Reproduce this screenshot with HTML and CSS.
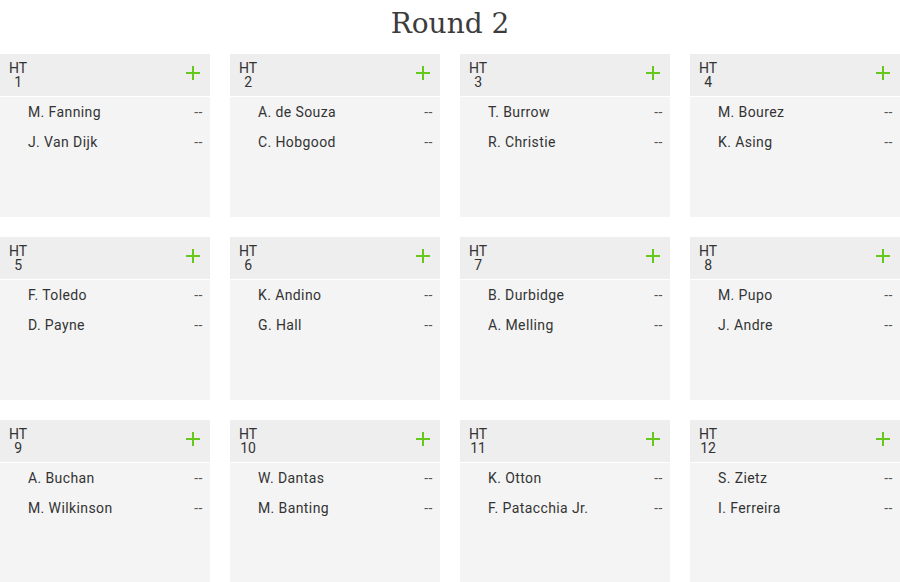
FILE: index.html
```html
<!DOCTYPE html>
<html>
<head>
  <title>Round 2</title>
  <link rel="stylesheet" href="styles.css">
</head>
<body>
  <h1 class="round-title">Round 2</h1>
  <div class="heat-grid">
    <div class="heat">
      <div class="heat-head"><div class="heat-label"><div>HT</div><div>1</div></div><span class="add"></span></div>
      <div class="surfer"><span>M. Fanning</span><span class="score">--</span></div>
      <div class="surfer"><span>J. Van Dijk</span><span class="score">--</span></div>
    </div>
    <div class="heat">
      <div class="heat-head"><div class="heat-label"><div>HT</div><div>2</div></div><span class="add"></span></div>
      <div class="surfer"><span>A. de Souza</span><span class="score">--</span></div>
      <div class="surfer"><span>C. Hobgood</span><span class="score">--</span></div>
    </div>
    <div class="heat">
      <div class="heat-head"><div class="heat-label"><div>HT</div><div>3</div></div><span class="add"></span></div>
      <div class="surfer"><span>T. Burrow</span><span class="score">--</span></div>
      <div class="surfer"><span>R. Christie</span><span class="score">--</span></div>
    </div>
    <div class="heat">
      <div class="heat-head"><div class="heat-label"><div>HT</div><div>4</div></div><span class="add"></span></div>
      <div class="surfer"><span>M. Bourez</span><span class="score">--</span></div>
      <div class="surfer"><span>K. Asing</span><span class="score">--</span></div>
    </div>
    <div class="heat">
      <div class="heat-head"><div class="heat-label"><div>HT</div><div>5</div></div><span class="add"></span></div>
      <div class="surfer"><span>F. Toledo</span><span class="score">--</span></div>
      <div class="surfer"><span>D. Payne</span><span class="score">--</span></div>
    </div>
    <div class="heat">
      <div class="heat-head"><div class="heat-label"><div>HT</div><div>6</div></div><span class="add"></span></div>
      <div class="surfer"><span>K. Andino</span><span class="score">--</span></div>
      <div class="surfer"><span>G. Hall</span><span class="score">--</span></div>
    </div>
    <div class="heat">
      <div class="heat-head"><div class="heat-label"><div>HT</div><div>7</div></div><span class="add"></span></div>
      <div class="surfer"><span>B. Durbidge</span><span class="score">--</span></div>
      <div class="surfer"><span>A. Melling</span><span class="score">--</span></div>
    </div>
    <div class="heat">
      <div class="heat-head"><div class="heat-label"><div>HT</div><div>8</div></div><span class="add"></span></div>
      <div class="surfer"><span>M. Pupo</span><span class="score">--</span></div>
      <div class="surfer"><span>J. Andre</span><span class="score">--</span></div>
    </div>
    <div class="heat">
      <div class="heat-head"><div class="heat-label"><div>HT</div><div>9</div></div><span class="add"></span></div>
      <div class="surfer"><span>A. Buchan</span><span class="score">--</span></div>
      <div class="surfer"><span>M. Wilkinson</span><span class="score">--</span></div>
    </div>
    <div class="heat">
      <div class="heat-head"><div class="heat-label"><div>HT</div><div>10</div></div><span class="add"></span></div>
      <div class="surfer"><span>W. Dantas</span><span class="score">--</span></div>
      <div class="surfer"><span>M. Banting</span><span class="score">--</span></div>
    </div>
    <div class="heat">
      <div class="heat-head"><div class="heat-label"><div>HT</div><div>11</div></div><span class="add"></span></div>
      <div class="surfer"><span>K. Otton</span><span class="score">--</span></div>
      <div class="surfer"><span>F. Patacchia Jr.</span><span class="score">--</span></div>
    </div>
    <div class="heat">
      <div class="heat-head"><div class="heat-label"><div>HT</div><div>12</div></div><span class="add"></span></div>
      <div class="surfer"><span>S. Zietz</span><span class="score">--</span></div>
      <div class="surfer"><span>I. Ferreira</span><span class="score">--</span></div>
    </div>
  </div>
</body>
</html>
```

FILE: styles.css
```css
body {
  margin: 0;
  background-color: #fff;
  color: #333;
  font-family: Roboto, "Liberation Sans", sans-serif;
  overflow: hidden;
}

.round-title {
  margin: 0;
  height: 54px;
  line-height: 48px;
  text-align: center;
  font-family: "DejaVu Serif", serif;
  font-weight: 300;
  font-size: 28px;
  color: #3c3c3c;
}

.heat-grid {
  display: grid;
  grid-template-columns: repeat(4, 210px);
  grid-auto-rows: 163px;
  column-gap: 20px;
  row-gap: 20px;
}

.heat {
  background-color: #f4f4f4;
}

.heat-head {
  display: flex;
  justify-content: space-between;
  align-items: flex-start;
  height: 42px;
  padding: 7px 10px 0 9px;
  box-sizing: border-box;
  background-color: #eee;
  border-bottom: 1px solid #fff;
  height: 43px;
}

.heat-label {
  text-align: center;
  font-size: 14px;
  line-height: 14px;
  color: #333;
}

/* plus sign drawn with two bars */
.add {
  position: relative;
  width: 14px;
  height: 14px;
  margin-top: 5px;
}

.add::before,
.add::after {
  content: "";
  position: absolute;
  background-color: #66c81a;
}

.add::before {
  left: 0;
  top: 6px;
  width: 14px;
  height: 2px;
}

.add::after {
  left: 6px;
  top: 0;
  width: 2px;
  height: 14px;
}

.surfer {
  display: flex;
  justify-content: space-between;
  align-items: center;
  height: 30px;
  padding: 0 7px 0 28px;
  font-size: 14px;
  letter-spacing: 0.4px;
  color: #333;
}

.score {
  color: #555;
  letter-spacing: 0.5px;
  font-variant-ligatures: none;
}
```
